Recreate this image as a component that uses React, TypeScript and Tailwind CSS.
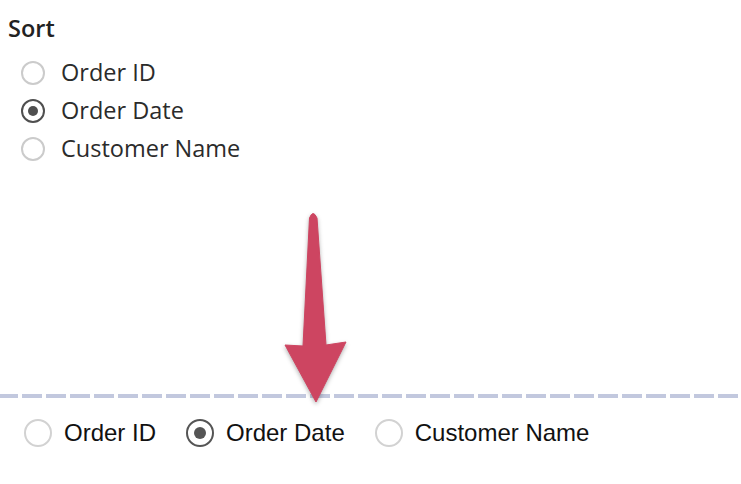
import React from 'react';

const topOptions = ['Order ID', 'Order Date', 'Customer Name'];
const selected = 'Order Date';

const TopRadio = ({ label, checked }: { label: string; checked: boolean }) => (
  <div className="h-[38px] flex items-center gap-[16px]">
    <span
      className={
        checked
          ? 'w-[24px] h-[24px] rounded-full border-2 border-[#4f4f4f] flex items-center justify-center'
          : 'w-[24px] h-[24px] rounded-full border-2 border-[#cbcbcb]'
      }
    >
      {checked && <span className="w-[10px] h-[10px] rounded-full bg-[#4f4f4f]" />}
    </span>
    <span className="text-[23.5px] text-[#2b2b2b]">{label}</span>
  </div>
);

const BottomRadio = ({ label, checked }: { label: string; checked: boolean }) => (
  <div className="flex items-center gap-[12px]">
    <span
      className={
        checked
          ? 'w-[28px] h-[28px] rounded-full border-2 border-[#555555] flex items-center justify-center'
          : 'w-[28px] h-[28px] rounded-full border-2 border-[#d2d2d2]'
      }
    >
      {checked && <span className="w-[12px] h-[12px] rounded-full bg-[#555555]" />}
    </span>
    <span className="text-[24px] text-[#111111] font-['Liberation_Sans',Arial,sans-serif]">{label}</span>
  </div>
);

export default function App() {
  return (
    <div className="relative w-[741px] h-[484px] bg-white overflow-hidden font-['Open_Sans','Noto_Sans',sans-serif]">
      {/* tableau style list */}
      <div className="pl-2 pt-[14px]">
        <div className="text-[23.5px] leading-[28px] font-semibold text-[#222222]">Sort</div>
        <div className="mt-[12px] pl-[13px] flex flex-col">
          {topOptions.map((o) => (
            <TopRadio key={o} label={o} checked={o === selected} />
          ))}
        </div>
      </div>

      {/* dashed divider */}
      <div className="mt-[226px] ml-[-2px] w-[745px] h-[4px] bg-[repeating-linear-gradient(90deg,#c2c8de_0_20px,transparent_20px_24px)]" />

      {/* html style row */}
      <div className="mt-[15px] h-[40px] pl-[24px] flex items-center gap-[30px]">
        {topOptions.map((o) => (
          <BottomRadio key={o} label={o} checked={o === selected} />
        ))}
      </div>

      {/* arrow */}
      <svg
        className="absolute left-0 top-0 drop-shadow-[0_2px_2px_rgba(0,0,0,0.3)]"
        width="741"
        height="484"
        viewBox="0 0 741 484"
      >
        <path
          d="M309.5 218 Q313 209 317 218 L326 345 L346 342 L316 402 L285 345 L303 346 Z"
          fill="#cd4561"
          stroke="#cd4561"
          strokeWidth="1"
          strokeLinejoin="round"
        />
      </svg>
    </div>
  );
}
